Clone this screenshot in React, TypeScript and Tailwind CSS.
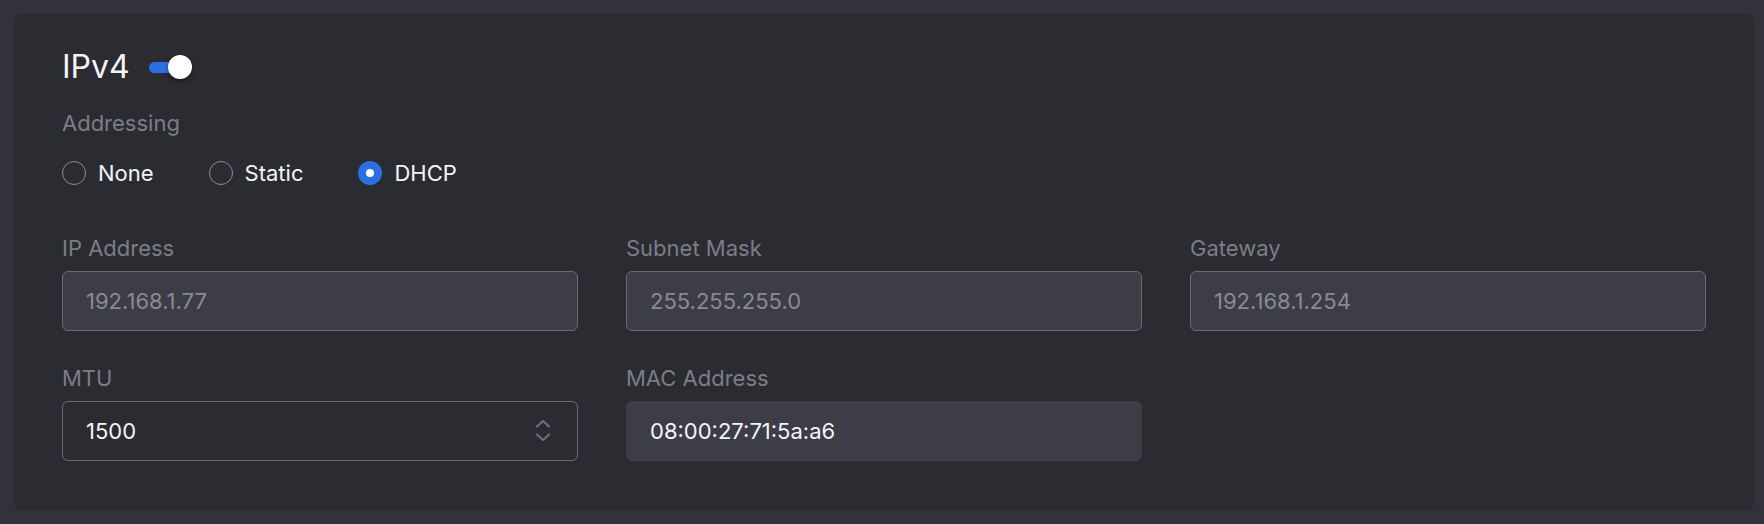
import React from "react";

const labelClassName = "block text-[22px] leading-[26px] text-[#7c7d86]";

const boxBaseClassName =
  "mt-[10px] flex h-[60px] w-full items-center rounded-[6px] pl-[23px] pr-[26px] text-[22px] leading-[26px]";

interface FieldProps {
  label: string;
  value: string;
  variant: "disabled" | "number" | "readonly";
}

function Field({ label, value, variant }: FieldProps) {
  const boxClassName =
    variant === "disabled"
      ? "border border-[#6b6a7a] bg-[#3d3d48] text-[#8a8a93]"
      : variant === "number"
        ? "border border-[#6b6a7a] bg-[#2b2c32] text-[#f4f4f5]"
        : "border border-[#3d3d48] bg-[#3d3d48] text-[#f4f4f5]";

  return (
    <div>
      <span className={labelClassName}>{label}</span>
      <div className={[boxBaseClassName, boxClassName].join(" ")}>
        <span className="flex-1">{value}</span>
        {variant === "number" ? (
          <svg width="16" height="24" viewBox="0 0 16 24" fill="none" aria-hidden>
            <path
              d="M2 7.5 L8 2 L14 7.5"
              stroke="#6e6d7f"
              strokeWidth="2.2"
              strokeLinecap="round"
              strokeLinejoin="round"
            />
            <path
              d="M2 15.5 L8 21 L14 15.5"
              stroke="#6e6d7f"
              strokeWidth="2.2"
              strokeLinecap="round"
              strokeLinejoin="round"
            />
          </svg>
        ) : null}
      </div>
    </div>
  );
}

function Radio({ label, checked }: { label: string; checked?: boolean }) {
  return (
    <label className="inline-flex items-center gap-[12px]">
      {checked ? (
        <span className="flex h-[24px] w-[24px] items-center justify-center rounded-full bg-[#2b6fe3]">
          <span className="h-[8px] w-[8px] rounded-full bg-white" />
        </span>
      ) : (
        <span className="h-[24px] w-[24px] rounded-full border-[1.5px] border-[#8d8d95]" />
      )}
      <span className="text-[22px] leading-[26px] text-[#f4f4f5]">{label}</span>
    </label>
  );
}

export default function App() {
  return (
    <div
      className="min-h-[524px] bg-[#32323c] pb-[13px] pl-[14px] pr-[10px] pt-[13px]"
      style={{ fontFamily: "Inter, 'Noto Sans', sans-serif" }}
    >
      <section className="rounded-[8px] bg-[#2b2c32] px-[48px] pb-[50px] pt-[35px]">
        <div className="flex h-[38px] items-center gap-[19px]">
          <h2 className="text-[32px] font-normal leading-[38px] text-[#f4f4f5]">IPv4</h2>
          <div className="relative h-[24px] w-[43px]">
            <span className="absolute left-0 top-[7px] h-[11px] w-[38px] rounded-full bg-[#2b6fe3]" />
            <span className="absolute right-0 top-0 h-[24px] w-[24px] rounded-full bg-white shadow-[0_2px_4px_rgba(0,0,0,0.45)]" />
          </div>
        </div>

        <p className="mt-[24px] text-[22px] leading-[26px] text-[#7c7d86]">Addressing</p>
        <div className="mt-[25px] flex h-[24px] items-center gap-[55px]">
          <Radio label="None" />
          <Radio label="Static" />
          <Radio label="DHCP" checked />
        </div>

        <div className="mt-[50px] grid grid-cols-3 gap-x-[48px] gap-y-[34px]">
          <Field label="IP Address" value="192.168.1.77" variant="disabled" />
          <Field label="Subnet Mask" value="255.255.255.0" variant="disabled" />
          <Field label="Gateway" value="192.168.1.254" variant="disabled" />
          <Field label="MTU" value="1500" variant="number" />
          <Field label="MAC Address" value="08:00:27:71:5a:a6" variant="readonly" />
        </div>
      </section>
    </div>
  );
}
